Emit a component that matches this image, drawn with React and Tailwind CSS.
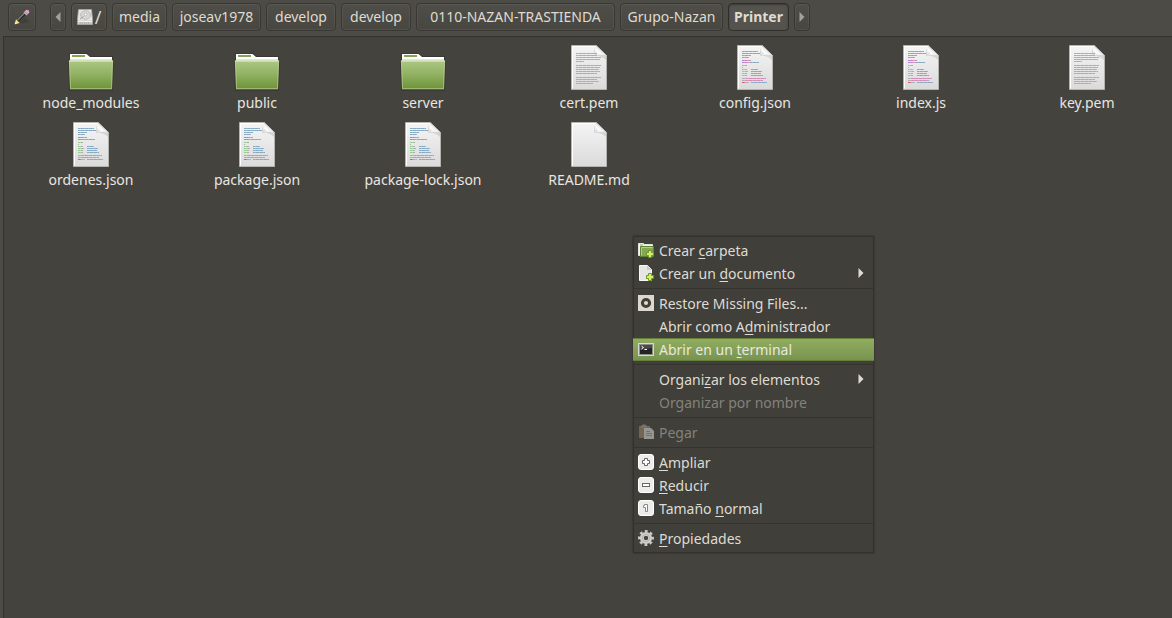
import React from "react";

const CODE_LINES = [
  [6, [5, 21, "b"]],
  [8, [5, 23, "b"]],
  [10, [5, 14, "b"]],
  [12, [5, 12, "b"]],
  [15, [5, 9, "v"], [9, 14, "p"]],
  [17, [5, 9, "v"], [9, 13, "p"], [13, 22, "b"]],
  [20, [5, 8, "g"], [8, 10, "n"]],
  [22, [5, 6, "n"]],
  [24, [5, 8, "g"], [8, 10, "n"], [14, 21, "b"]],
  [26, [5, 9, "g"], [9, 11, "n"], [14, 25, "b"]],
  [28, [5, 8, "g"], [8, 10, "n"], [14, 24, "b"]],
  [30, [5, 8, "g"], [8, 10, "n"], [14, 26, "b"]],
  [33, [5, 9, "n"], [9, 29, "p"]],
  [35, [5, 9, "n"], [9, 26, "p"]],
  [37, [5, 8, "r"], [8, 12, "n"], [14, 30, "b"]],
];

const TEXT_LINES = [
  [8, 26], [10, 26], [12, 30], [14, 29], [16, 13],
  [20, 30], [22, 29], [24, 28], [26, 29], [28, 26],
  [32, 30], [34, 26], [36, 28], [38, 22],
].map(([y, end]) => [y, [5, end, "n"]]);

const INK = {
  b: "#86aac4",
  v: "#b07fd0",
  p: "#d58bb8",
  g: "#93cf92",
  n: "#adadad",
  r: "#dc5a70",
};

function DocumentIcon({ lines }) {
  return (
    <svg width="48" height="48" viewBox="0 0 48 48" aria-hidden="true">
      <defs>
        <linearGradient id="paper" x1="0" y1="0" x2="0" y2="1">
          <stop offset="0" stopColor="#f5f5f5" />
          <stop offset="1" stopColor="#dadada" />
        </linearGradient>
        <linearGradient id="curl" x1="0" y1="1" x2="1" y2="0">
          <stop offset="0" stopColor="#b9b9b9" />
          <stop offset="0.25" stopColor="#ffffff" />
          <stop offset="0.6" stopColor="#e2e2e2" />
          <stop offset="1" stopColor="#a9a9a9" />
        </linearGradient>
      </defs>
      <path d="M6.5 2.5H31L41.500 12.500V46.500H6.500Z" fill="url(#paper)" stroke="#b4b4b0" />
      <path d="M7.500 45.500V3.500H30" fill="none" stroke="#fff" />
      <path d="M29 5V13Q35 12 41 17V12H31Z" fill="#000" opacity="0.1" />
      <path d="M31 2.500V11.500C34 10 38 10.500 41.500 12.500Z" fill="url(#curl)" />
      <path d="M31 2.500L41.500 12.500" fill="none" stroke="#c6c6c4" />
      {lines.map(([y, ...runs]) =>
        runs.map(([from, to, ink]) => (
          <g key={y + "-" + from}>
            <rect x={from + 6} y={y + 2} width={to - from} height="1" fill={INK[ink]} />
            <path
              d={`M${from + 6} ${y + 2.5}H${to + 6}`}
              stroke="#fff"
              strokeOpacity="0.18"
              strokeDasharray="1 3"
              strokeDashoffset="-2"
            />
          </g>
        ))
      )}
    </svg>
  );
}

function FolderIcon() {
  return (
    <svg width="48" height="48" viewBox="0 0 48 48" aria-hidden="true">
      <defs>
        <linearGradient id="folder" x1="0" y1="0" x2="0" y2="1">
          <stop offset="0" stopColor="#acc883" />
          <stop offset="0.5" stopColor="#8fb061" />
          <stop offset="1" stopColor="#6d9138" />
        </linearGradient>
      </defs>
      <path d="M2 10H20L23 13H46V20L47 20L46 48H2L1 20H2Z" fill="#2f2e2a" opacity="0.45" />
      <path d="M3 11H19.500L23 14H45V20H3Z" fill="#fff" />
      <rect x="5" y="12" width="13" height="2" fill="#87a556" />
      <path d="M3 16H45V17H3Z" fill="#e4e4e4" />
      <path d="M2 17.500H46L45 46.500H3Z" fill="url(#folder)" />
      <path d="M2.500 18.500H45.500L44.500 45.500H3.500Z" fill="none" stroke="#d4e6b8" strokeOpacity="0.45" />
      <path d="M2 18H46" stroke="#d5e3c0" />
    </svg>
  );
}

function PencilIcon() {
  return (
    <svg width="16" height="16" viewBox="0 0 16 16" aria-hidden="true">
      <path d="M5 14.500L15 13.500L12 9Z" fill="#000" opacity="0.15" />
      <path d="M2.500 10.500L10.500 2.500L13.500 5.500L5.500 13.500Z" fill="#2b2a28" />
      <path d="M3.500 11L11 3.500" stroke="#85837d" strokeWidth="1.200" />
      <path d="M5.500 12.500L12.500 5.500" stroke="#4c4b48" />
      <path d="M10 3L13 6" stroke="#b8b8b8" strokeWidth="1.500" />
      <path d="M10.500 2.500L12 1Q15.500 0.200 15.300 3.800L13.500 5.500Z" fill="#dc9fd0" />
      <path d="M0.700 15.300L2 10.300L5.700 14Z" fill="#efe19c" />
      <path d="M0.700 15.300L1.300 12.800L3.200 14.700Z" fill="#fff27a" />
    </svg>
  );
}

function DriveIcon() {
  return (
    <svg width="16" height="16" viewBox="0 0 16 16" aria-hidden="true">
      <path d="M1.500 0.500H14.500L15.500 11V15.500H0.500V11Z" fill="#c6c6c4" stroke="#a5a4a1" />
      <path d="M2 1H14L15 11.500H1Z" fill="#e6e6e5" />
      <ellipse cx="8.500" cy="6" rx="5" ry="4.300" fill="#d6d6d4" stroke="#b4b4b2" strokeWidth="0.800" />
      <circle cx="8.500" cy="5.500" r="1.400" fill="#f7f7f7" stroke="#a4a4a2" strokeWidth="0.600" />
      <path d="M3 10L6.500 7.500" stroke="#9a9a98" />
      <path d="M1 12.500H15" stroke="#f2f2f1" />
      <path d="M3 14H12" stroke="#9f9f9d" strokeDasharray="1 1" />
    </svg>
  );
}

function Arrow({ left, className }) {
  return (
    <svg width="6" height="10" viewBox="0 0 6 10" className={className} aria-hidden="true">
      <path d={left ? "M5.500 0V10L0.500 5Z" : "M0.500 0V10L5.500 5Z"} fill="currentColor" />
    </svg>
  );
}

function PlusBadge() {
  return (
    <path
      d="M10.500 8.500H13.500V10.500H15.500V13.500H13.500V15.500H10.500V13.500H8.500V10.500H10.500Z"
      fill="#d3ee6e"
      stroke="#6b9a1c"
    />
  );
}

const MENU_ICONS = {
  folder: (
    <>
      <path d="M0.500 1.500H5.500L6.500 2.500H14.500V13.500H0.500Z" fill="#f4f4f2" stroke="#e4e4e0" />
      <path d="M2 3H5" stroke="#87a556" />
      <path d="M2.500 4.500H15.500V14.500H2.500Z" fill="#86a556" stroke="#5f8133" />
      <path d="M3.500 13.500V5.500H14.500" fill="none" stroke="#b4cd8c" />
      <PlusBadge />
    </>
  ),
  document: (
    <>
      <path d="M1.500 0.500H9.500L13.500 4.500V15.500H1.500Z" fill="#e6e6e4" stroke="#f8f8f8" />
      <path d="M9 0.500V5L13.500 4.500Z" fill="#c9c9c7" />
      <PlusBadge />
    </>
  ),
  restore: (
    <>
      <rect width="16" height="16" fill="#dcd8cf" />
      <circle cx="8" cy="8" r="3.600" fill="none" stroke="#403f3a" strokeWidth="3" />
    </>
  ),
  terminal: (
    <>
      <rect x="0.500" y="2.500" width="15" height="12" fill="#20201f" stroke="#d8d8d4" />
      <rect x="1.500" y="3.500" width="13" height="10" fill="#242426" stroke="#8d8d89" />
      <path d="M2 9V4H14V7Z" fill="#4a4a4e" />
      <path d="M3.500 5L5.500 6.500L3.500 8M6.500 8.500H9" fill="none" stroke="#fff" />
    </>
  ),
  paste: (
    <>
      <path d="M1 2H12V14H1Z" fill="#75644f" />
      <path d="M3 3.500V1.500H4.500V0.500H7.500V1.500H9V3.500Z" fill="#77766f" />
      <path d="M6 4H13L16 7V15H6Z" fill="#96958f" />
      <path d="M8 7.500H12M8 9.500H14M8 11.500H14" stroke="#73726c" />
    </>
  ),
  zoomIn: (
    <>
      <rect x="0.500" y="0.500" width="15" height="15" rx="2.500" fill="#ececea" stroke="#fff" />
      <path d="M6.500 4.500H9.500V6.500H11.500V9.500H9.500V11.500H6.500V9.500H4.500V6.500H6.500Z" fill="#fff" stroke="#666" />
    </>
  ),
  zoomOut: (
    <>
      <rect x="0.500" y="0.500" width="15" height="15" rx="2.500" fill="#ececea" stroke="#fff" />
      <rect x="4.500" y="6.500" width="7" height="3" fill="#fff" stroke="#666" />
    </>
  ),
  zoomReset: (
    <>
      <rect x="0.500" y="0.500" width="15" height="15" rx="2.500" fill="#ececea" stroke="#fff" />
      <path d="M6.500 4.500H9.500V11.500H7.500V7.500H5.500V5.500H6.500Z" fill="#fff" stroke="#888" />
    </>
  ),
  gear: (
    <>
      <circle cx="8" cy="8" r="6.800" fill="none" stroke="#c8c8c5" strokeWidth="2.400" strokeDasharray="2.900 2.440" strokeDashoffset="1.450" />
      <circle cx="8" cy="8" r="4.100" fill="none" stroke="#cececb" strokeWidth="4" />
      <circle cx="8" cy="8" r="3.600" fill="none" stroke="#b2b2af" />
      <circle cx="8" cy="8" r="2" fill="#454440" />
    </>
  ),
};

const CRUMBS = [
  { label: "media", width: "min-w-[55px]" },
  { label: "joseav1978", width: "min-w-[89px]" },
  { label: "develop", width: "min-w-[70px]" },
  { label: "develop", width: "min-w-[70px]" },
  { label: "0110-NAZAN-TRASTIENDA", width: "min-w-[199px]" },
  { label: "Grupo-Nazan", width: "min-w-[103px]" },
];

const FILES = [
  ["node_modules", "folder"],
  ["public", "folder"],
  ["server", "folder"],
  ["cert.pem", "text"],
  ["config.json", "code"],
  ["index.js", "code"],
  ["key.pem", "text"],
  ["ordenes.json", "code"],
  ["package.json", "code"],
  ["package-lock.json", "code"],
  ["README.md", "blank"],
];

const DOC_LINES = { text: TEXT_LINES, code: CODE_LINES, blank: [] };

/* An underscore marks the letter that serves as the keyboard mnemonic. */
const MENU = [
  [
    { text: "Crear _carpeta", icon: "folder" },
    { text: "Crear un _documento", icon: "document", submenu: true },
  ],
  [
    { text: "Restore Missing Files...", icon: "restore" },
    { text: "Abrir como A_dministrador" },
    { text: "Abrir en un _terminal", icon: "terminal", active: true },
  ],
  [
    { text: "Organi_zar los elementos", submenu: true },
    { text: "Organizar por nombre", disabled: true },
  ],
  [{ text: "Pegar", icon: "paste", disabled: true }],
  [
    { text: "_Ampliar", icon: "zoomIn" },
    { text: "_Reducir", icon: "zoomOut" },
    { text: "Tamaño _normal", icon: "zoomReset" },
  ],
  [{ text: "_Propiedades", icon: "gear" }],
];

const BUTTON =
  "flex h-7 shrink-0 items-center justify-center whitespace-nowrap rounded border border-[#383732] bg-linear-to-b from-[#504e48] to-[#484640] shadow-[inset_0_0_0_1px_rgba(255,255,255,0.06)]";

function Mnemonic({ text }) {
  const at = text.indexOf("_");
  if (at < 0) return text;
  return (
    <>
      {text.slice(0, at)}
      <span className="underline decoration-1 underline-offset-2 [text-decoration-skip-ink:none]">{text[at + 1]}</span>
      {text.slice(at + 2)}
    </>
  );
}

function MenuItem({ item }) {
  const tone = item.active
    ? "border-[#66803a] bg-linear-to-b from-[#91ad60] to-[#789350] text-[#e9e8df]"
    : item.disabled
    ? "border-transparent text-[#84827b]"
    : "border-transparent text-[#dfdbd2]";
  return (
    <button
      type="button"
      role="menuitem"
      disabled={item.disabled}
      className={"flex h-[23px] items-center gap-[5px] border-y pr-2.5 pl-[5px] text-left whitespace-nowrap " + tone}
    >
      <svg width="16" height="16" viewBox="0 0 16 16" className="mb-px shrink-0" aria-hidden="true">
        {item.icon && MENU_ICONS[item.icon]}
      </svg>
      <span className="flex-1">
        <Mnemonic text={item.text} />
      </span>
      {item.submenu && <Arrow className="mb-px" />}
    </button>
  );
}

function ContextMenu() {
  return (
    <div
      role="menu"
      className="absolute top-[236px] left-[633px] flex w-[241px] flex-col border border-[#32312d] bg-[#403f3a] py-0.5 shadow-[0_0_2px_rgba(0,0,0,0.4)]"
    >
      {MENU.map((group, i) => (
        <React.Fragment key={i}>
          {i > 0 && <div role="separator" className="my-[3px] h-px bg-[#34332f]" />}
          <div role="group" className="-mx-px flex flex-col">
            {group.map((item) => (
              <MenuItem key={item.text} item={item} />
            ))}
          </div>
        </React.Fragment>
      ))}
    </div>
  );
}

export default function App() {
  return (
    <div className="relative flex min-h-screen flex-col bg-[#4d4b45] font-['Noto_Sans','Open_Sans',sans-serif] text-[14px] leading-5 text-[#dfdbd2]">
      <nav aria-label="Ruta" className="flex h-9 items-center gap-[5px] px-2 pb-0.5">
        <button type="button" aria-label="Editar ruta" className={BUTTON + " mr-[9px] w-7"}>
          <PencilIcon />
        </button>
        <button type="button" aria-label="Anterior" className={BUTTON + " w-4 text-[#a3a19b]"}>
          <Arrow left />
        </button>
        <button type="button" className={BUTTON + " w-9 gap-0.5"}>
          <DriveIcon />
          <span className="text-[18px]">/</span>
        </button>
        {CRUMBS.map((crumb, i) => (
          <button key={i} type="button" className={BUTTON + " " + crumb.width}>
            {crumb.label}
          </button>
        ))}
        <button
          type="button"
          aria-current="page"
          className="flex h-7 min-w-[61px] shrink-0 items-center justify-center rounded border border-[#2f2e2a] bg-[#55534d] font-bold shadow-[inset_0_1px_2px_rgba(0,0,0,0.3)]"
        >
          Printer
        </button>
        <button type="button" aria-label="Siguiente" className={BUTTON + " w-4 text-[#a3a19b]"}>
          <Arrow />
        </button>
      </nav>
      <main className="ml-[3px] flex-1 border-t border-l border-[#34332f] bg-[#45433e] pt-1.5 pl-1">
        <ul className="grid grid-cols-[repeat(auto-fill,166px)] text-[#e8e6e1]">
          {FILES.map(([name, kind]) => (
            <li key={name} className="flex h-[77px] flex-col items-center">
              {kind === "folder" ? <FolderIcon /> : <DocumentIcon lines={DOC_LINES[kind]} />}
              <span className="mt-0.5">{name}</span>
            </li>
          ))}
        </ul>
      </main>
      <ContextMenu />
    </div>
  );
}
